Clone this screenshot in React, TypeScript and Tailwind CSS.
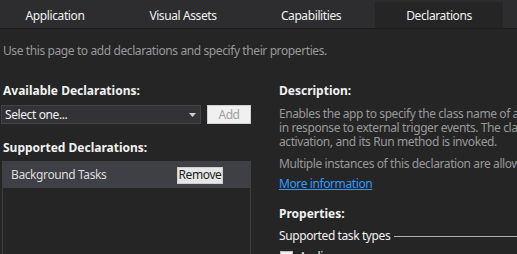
import React from "react";

export default function App() {
  const tabs = ["Application", "Visual Assets", "Capabilities", "Declarations"];
  return (
    <div
      className="w-[517px] h-[254px] overflow-hidden bg-[#252526] text-[12px] leading-[14px] tracking-[-0.4px] relative"
      style={{ fontFamily: '"Noto Sans", "Open Sans", sans-serif' }}
    >
      <div className="h-[29px] bg-[#2d2d30] border-b border-[#1c1c1c] flex items-end">
        <div className="flex -ml-[9px] h-[26px]">
          {tabs.map((t, i) => (
            <div
              key={t}
              className={
                i === 3
                  ? "w-[128px] h-[26px] flex items-center justify-center pt-[2px] text-[#f1f1f1] bg-[#252526]"
                  : "w-[128px] h-[26px] flex items-center justify-center pt-[2px] text-[#f1f1f1]"
              }
            >
              {t}
            </div>
          ))}
        </div>
      </div>
      <div className="pl-[3px] pt-[15px] text-[#999999]">
        Use this page to add declarations and specify their properties.
      </div>
      <div className="flex mt-[26px]">
        <div className="w-[279px] shrink-0">
          <div className="pl-[3px] font-bold tracking-normal text-[#f1f1f1]">Available Declarations:</div>
          <div className="flex items-center mt-[7px] pl-[1px]">
            <div className="w-[200px] h-[19px] bg-[#333337] border border-[#434346] flex items-center justify-between pl-[3px] pr-[4px] text-[#f1f1f1]">
              <span>Select one...</span>
              <svg width="7" height="4" viewBox="0 0 7 4">
                <path d="M0 0H7L3.5 4Z" fill="#d0d0d0" />
              </svg>
            </div>
            <div className="ml-[6px] w-[44px] h-[19px] bg-[#f0f0f0] border border-[#d0d0d0] flex items-center justify-center text-[#a0a0a0]">
              Add
            </div>
          </div>
          <div className="pl-[3px] mt-[17px] font-bold tracking-normal text-[#f1f1f1]">Supported Declarations:</div>
          <div className="ml-[2px] mt-[6px] w-[249px] h-[110px] border border-[#3f3f46] bg-[#252526]">
            <div className="h-[26px] bg-[#3f3f46] flex items-center justify-between pl-[8px] pr-[27px] text-[#dcdcdc]">
              <span>Background Tasks</span>
              <div className="w-[46px] h-[17px] bg-[#e6e6e6] border border-[#cfcfcf] flex items-center justify-center text-[#1e1e1e]">
                Remove
              </div>
            </div>
          </div>
        </div>
        <div className="flex-1 min-w-0">
          <div className="font-bold tracking-normal text-[#f1f1f1]">Description:</div>
          <div className="mt-[9px] text-[#999999] whitespace-nowrap">
            <div>Enables the app to specify the class name of a background task</div>
            <div>in response to external trigger events. The class is activated</div>
            <div>activation, and its Run method is invoked.</div>
          </div>
          <div className="mt-[8px] text-[#999999] whitespace-nowrap">
            Multiple instances of this declaration are allowed in each app.
          </div>
          <div className="mt-[6px] text-[#3399ff] underline">More information</div>
          <div className="mt-[16px] font-bold tracking-normal text-[#f1f1f1]">Properties:</div>
          <div className="mt-[8px] flex items-center text-[#f1f1f1] whitespace-nowrap">
            <span>Supported task types</span>
            <div className="ml-[4px] flex-1 h-px bg-[#b0b0b0]" />
          </div>
          <div className="mt-[7px] ml-[1px] flex items-center gap-[6px] text-[#f1f1f1]">
            <div className="w-[13px] h-[13px] bg-[#f0f0f0] border border-[#c0c0c0]" />
            <span>Audio</span>
          </div>
        </div>
      </div>
    </div>
  );
}
